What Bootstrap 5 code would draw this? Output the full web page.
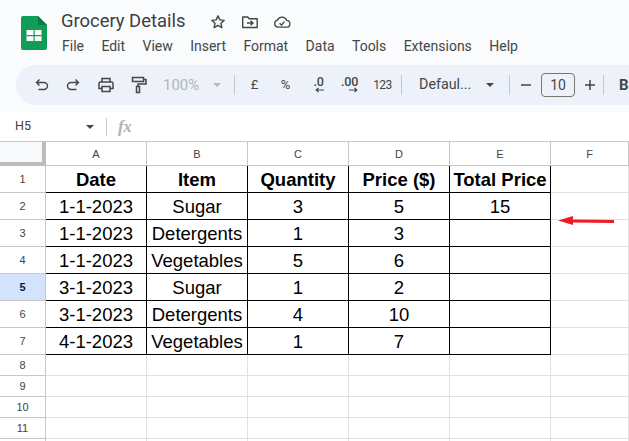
<!DOCTYPE html>
<html lang="en">
<head>
<meta charset="utf-8">
<title>Grocery Details</title>
<link href="https://cdn.jsdelivr.net/npm/bootstrap@5.3.0/dist/css/bootstrap.min.css" rel="stylesheet">
<style>
html,body{width:629px;height:441px;overflow:hidden;background:#fff}
body{font-family:Roboto,"Liberation Sans",sans-serif;color:#444}
.app-head{height:112px;background:#f9fbfd;overflow:hidden}
.head-row{height:65px;padding-left:21px}
.doc-logo{width:26px;height:34px;margin-top:16px;flex:none}
.doc-meta{margin-left:14px;padding-top:10px}
.doc-title{font-size:18.400px;line-height:22px;color:#3c4043;width:149px}
.doc-icons{gap:14.500px;margin-top:2px}
.menu-row{gap:17.400px;font-size:14px;line-height:18px;margin-top:5px;margin-left:1px;color:#444746}
.tool-pill{margin-left:16px;height:40px;background:#edf2fa;border-radius:20px 0 0 20px;padding-left:10px;width:640px;color:#444746}
.tbtn{width:31px;height:40px;flex:none}
.gap-two{gap:2px;margin-left:2px}
.zoom-txt{font-size:15px;color:#b3b6ba;width:38px;margin-left:9px;flex:none}
.tcaret{width:0;height:0;border-left:4px solid transparent;border-right:4px solid transparent;border-top:4px solid #444746;flex:none}
.tcaret-off{border-top-color:#b3b6ba;margin-left:12px}
.tsep{width:1px;height:20px;background:#c7c7c7;flex:none}
.sep-zoom{margin-left:13px}
.sep-fmt{margin-left:3px}
.sep-font{margin-left:15px}
.sep-size{margin-left:6px}
.sep-ref{height:18px;margin-left:12px}
.sym-first{margin-left:4px}
.dec-first{margin-left:2px}
.num-btn{margin-left:2px}
.sym-txt{font-size:13px}
.dec-stack{line-height:1}
.dec-txt{font-size:12.500px;font-weight:500;line-height:10px;letter-spacing:-.2px}
.num-txt{font-size:12px;letter-spacing:-.5px}
.font-txt{font-size:14.300px;width:58px;flex:none;margin-left:17px}
.font-caret{margin-left:9px}
.minus-ic{margin-left:9px}
.size-box{width:34px;height:24px;border:1px solid #747775;border-radius:4px;font-size:14px;flex:none}
.bold-b{font-size:15px;font-weight:700;color:#444746;margin-left:15px}
.formula-row{height:29px;background:#fff;font-size:12.500px;color:#3c4043}
.cell-ref{width:86px;padding-left:15px;flex:none}
.fx-txt{font-family:"Liberation Serif",serif;font-style:italic;font-weight:700;font-size:17px;color:#b0b3b6;margin-left:11px;letter-spacing:-.5px}
.sheet-wrap{height:300px;overflow:hidden;position:relative;border-top:1px solid #c7c7c7}
.sheet-grid{display:grid;grid-template-columns:46px repeat(5,101px) 78px;grid-template-rows:24px repeat(7,27px) repeat(5,21px)}
.sheet-grid>div{display:flex;align-items:center;justify-content:center;border-right:1px solid #e1e1e1;border-bottom:1px solid #e1e1e1;white-space:nowrap;overflow:hidden}
.sheet-grid>.corner-c{background:#f8f9fa;border-right:4px solid #bdbdbd;border-bottom:4px solid #bdbdbd}
.sheet-grid>.col-h{font:11px "Liberation Sans",sans-serif;color:#444;border-right-color:#c7c7c7;border-bottom-color:#c7c7c7}
.sheet-grid>.row-h{font:11px "Liberation Sans",sans-serif;color:#444;border-right-color:#c7c7c7;border-bottom-color:#c7c7c7}
.sheet-grid>.row-on{background:#d3e3fd;color:#041e49;font-weight:700}
.sheet-grid>.dat{font:18.500px "Liberation Sans",sans-serif;color:#000;border-right-color:#000;border-bottom-color:#000;padding-top:1px}
.sheet-grid>.dat-b{font-weight:700}
.note-arrow{position:absolute;left:558px;top:72px}
</style>
</head>
<body>
<header class="app-head">
  <div class="head-row d-flex">
    <svg class="doc-logo" viewBox="0 0 26 34"><path d="M2 0H17L26 9V32a2 2 0 0 1-2 2H2a2 2 0 0 1-2-2V2A2 2 0 0 1 2 0Z" fill="#0f9d58"/><path d="M17 0L26 9H17Z" fill="#0b7a43"/><path d="M5.500 14H20.500V25H5.500Z" fill="#fff"/><path d="M12.500 14h1.200v11h-1.200zM5.500 19h15v1.200h-15z" fill="#0f9d58"/></svg>
    <div class="doc-meta">
      <div class="d-flex align-items-center">
        <div class="doc-title">Grocery Details</div>
        <div class="doc-icons d-flex align-items-center">
          <svg width="16" height="16" viewBox="0 0 16 16"><path d="M8 1.800l1.850 4.050 4.400.5-3.270 2.980.9 4.340L8 11.470l-3.880 2.200.9-4.340L1.750 6.350l4.400-.5Z" fill="none" stroke="#444746" stroke-width="1.400" stroke-linejoin="round"/></svg>
          <svg width="18" height="16" viewBox="0 0 18 16"><path d="M1.700 3h5l1.500 1.800h8v8.700H1.700Z" fill="none" stroke="#444746" stroke-width="1.400" stroke-linejoin="round"/><path d="M6 9h6M9.500 6.800L12 9l-2.500 2.200" fill="none" stroke="#444746" stroke-width="1.400"/></svg>
          <svg width="18" height="16" viewBox="0 0 18 16"><path d="M5 13.200a3.600 3.600 0 0 1-.5-7.100A4.900 4.900 0 0 1 13.600 6.400a3.400 3.400 0 0 1-.3 6.800Z" fill="none" stroke="#444746" stroke-width="1.300"/><path d="M6.500 9.200l2 1.800 3-3.400" fill="none" stroke="#444746" stroke-width="1.300"/></svg>
        </div>
      </div>
      <nav class="menu-row d-flex">
        <span>File</span><span>Edit</span><span>View</span><span>Insert</span><span>Format</span><span>Data</span><span>Tools</span><span>Extensions</span><span>Help</span>
      </nav>
    </div>
  </div>
  <div class="tool-pill d-flex align-items-center">
    <div class="d-flex">
      <div class="tbtn d-flex align-items-center justify-content-center"><svg width="16" height="16" viewBox="0 0 16 16"><path d="M5.500 2.500L2.500 5.500l3 3M2.800 5.500H10a3.500 3.500 0 0 1 0 7H4.500" fill="none" stroke="#444746" stroke-width="1.400"/></svg></div>
      <div class="tbtn d-flex align-items-center justify-content-center"><svg width="16" height="16" viewBox="0 0 16 16"><path d="M10.500 2.500l3 3-3 3M13.200 5.500H6a3.500 3.500 0 0 0 0 7h5.500" fill="none" stroke="#444746" stroke-width="1.400"/></svg></div>
    </div>
    <div class="d-flex gap-two">
      <div class="tbtn d-flex align-items-center justify-content-center"><svg width="18" height="18" viewBox="0 0 18 18"><path d="M5 6V2.500h8V6M5 12.500H2V7.500A1.500 1.500 0 0 1 3.500 6h11A1.500 1.500 0 0 1 16 7.500v5h-3M5 10.500h8v5H5Z" fill="none" stroke="#444746" stroke-width="1.500"/></svg></div>
      <div class="tbtn d-flex align-items-center justify-content-center"><svg width="16" height="18" viewBox="0 0 16 18"><path d="M1.500 1.500h11v4h-11ZM12.500 3.500h2.500v4.500H7v2.500M5.500 10.500h3v6h-3Z" fill="none" stroke="#444746" stroke-width="1.500"/></svg></div>
    </div>
    <div class="zoom-txt">100%</div>
    <div class="tcaret tcaret-off"></div>
    <div class="tsep sep-zoom"></div>
    <div class="tbtn sym-txt sym-first d-flex align-items-center justify-content-center">£</div>
    <div class="tbtn sym-txt d-flex align-items-center justify-content-center">%</div>
    <div class="tbtn dec-first d-flex align-items-center justify-content-center"><div class="dec-stack d-flex flex-column align-items-end"><span class="dec-txt">.0</span><svg class="d-block" width="9" height="6" viewBox="0 0 9 6"><path d="M9 3H1.500M3.500 1L1.200 3l2.300 2" fill="none" stroke="#444746" stroke-width="1.200"/></svg></div></div>
    <div class="tbtn d-flex align-items-center justify-content-center"><div class="dec-stack d-flex flex-column align-items-end"><span class="dec-txt">.00</span><svg class="d-block" width="9" height="6" viewBox="0 0 9 6"><path d="M0 3h7.500M5.500 1l2.300 2-2.300 2" fill="none" stroke="#444746" stroke-width="1.200"/></svg></div></div>
    <div class="tbtn num-txt num-btn d-flex align-items-center justify-content-center">123</div>
    <div class="tsep sep-fmt"></div>
    <div class="font-txt">Defaul...</div>
    <div class="tcaret font-caret"></div>
    <div class="tsep sep-font"></div>
    <svg class="minus-ic" width="14" height="14" viewBox="0 0 14 14"><path d="M2 7h10" stroke="#444746" stroke-width="1.500"/></svg>
    <div class="size-box d-flex align-items-center justify-content-center ms-2">10</div>
    <svg class="ms-2" width="14" height="14" viewBox="0 0 14 14"><path d="M2 7h10M7 2v10" stroke="#444746" stroke-width="1.500"/></svg>
    <div class="tsep sep-size"></div>
    <div class="bold-b">B</div>
  </div>
</header>
<div class="formula-row d-flex align-items-center">
  <div class="cell-ref">H5</div>
  <div class="tcaret"></div>
  <div class="tsep sep-ref"></div>
  <div class="fx-txt">fx</div>
</div>
<main class="sheet-wrap">
  <div class="sheet-grid">
    <div class="corner-c"></div><div class="col-h">A</div><div class="col-h">B</div><div class="col-h">C</div><div class="col-h">D</div><div class="col-h">E</div><div class="col-h">F</div>
    <div class="row-h">1</div><div class="dat dat-b">Date</div><div class="dat dat-b">Item</div><div class="dat dat-b">Quantity</div><div class="dat dat-b">Price ($)</div><div class="dat dat-b">Total Price</div><div></div>
    <div class="row-h">2</div><div class="dat">1-1-2023</div><div class="dat">Sugar</div><div class="dat">3</div><div class="dat">5</div><div class="dat">15</div><div></div>
    <div class="row-h">3</div><div class="dat">1-1-2023</div><div class="dat">Detergents</div><div class="dat">1</div><div class="dat">3</div><div class="dat"></div><div></div>
    <div class="row-h">4</div><div class="dat">1-1-2023</div><div class="dat">Vegetables</div><div class="dat">5</div><div class="dat">6</div><div class="dat"></div><div></div>
    <div class="row-h row-on">5</div><div class="dat">3-1-2023</div><div class="dat">Sugar</div><div class="dat">1</div><div class="dat">2</div><div class="dat"></div><div></div>
    <div class="row-h">6</div><div class="dat">3-1-2023</div><div class="dat">Detergents</div><div class="dat">4</div><div class="dat">10</div><div class="dat"></div><div></div>
    <div class="row-h">7</div><div class="dat">4-1-2023</div><div class="dat">Vegetables</div><div class="dat">1</div><div class="dat">7</div><div class="dat"></div><div></div>
    <div class="row-h">8</div><div></div><div></div><div></div><div></div><div></div><div></div>
    <div class="row-h">9</div><div></div><div></div><div></div><div></div><div></div><div></div>
    <div class="row-h">10</div><div></div><div></div><div></div><div></div><div></div><div></div>
    <div class="row-h">11</div><div></div><div></div><div></div><div></div><div></div><div></div>
    <div class="row-h"></div><div></div><div></div><div></div><div></div><div></div><div></div>
  </div>
  <svg class="note-arrow" width="57" height="12" viewBox="0 0 57 12"><path d="M0 6.500L15 2V5.500L56 6V9L15 8.500V11Z" fill="#ee1c25"/></svg>
</main>
<script src="https://cdn.jsdelivr.net/npm/bootstrap@5.3.0/dist/js/bootstrap.bundle.min.js"></script>
</body>
</html>
